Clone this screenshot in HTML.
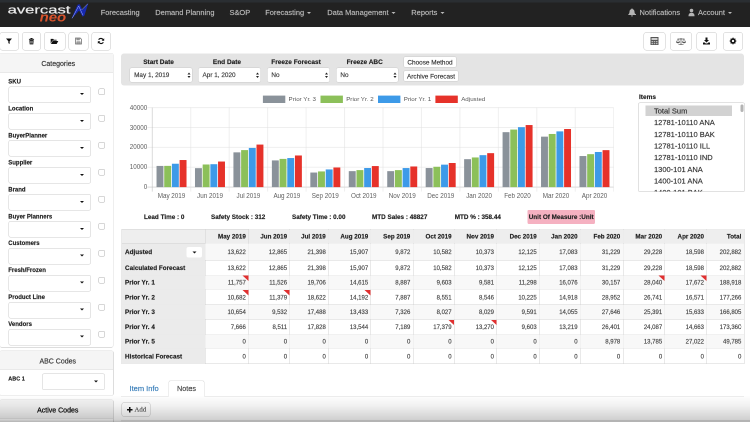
<!DOCTYPE html><html><head><meta charset="utf-8"><title>Avercast Neo</title><style>
*{box-sizing:border-box}
html,body{margin:0;padding:0;background:#fff}
body{width:750px;height:422px;overflow:hidden;position:relative}
#root{position:absolute;left:0;top:0;width:1500px;height:844px;transform:scale(.5);transform-origin:0 0;will-change:transform;font-family:"Liberation Sans",Arial,sans-serif;color:#333;font-size:14px;overflow:hidden;-webkit-text-stroke:.3px}
.abs{position:absolute}
#nav{left:0;top:0;width:1500px;height:53.5px;background:#222}
#nav .strip{left:0;top:0;width:1500px;height:5px;background:#2a2e32}
.nl{position:absolute;top:14px;height:22px;line-height:22px;font-size:14.9px;color:#bababa;white-space:nowrap}
.caret{display:inline-block;width:0;height:0;border-left:4px solid transparent;border-right:4px solid transparent;border-top:4px solid #bababa;vertical-align:middle;margin-left:6px}
.btn{position:absolute;background:#fff;border:1px solid #c6c6c6;border-radius:6px}
.panel{position:absolute;background:#fff;border:1px solid #ddd;border-radius:4px}
.ph{position:absolute;left:0;right:0;top:0;background:#f5f5f5;border-bottom:1px solid #ddd;text-align:center;font-size:14px;color:#333;border-radius:3px 3px 0 0}
.lbl{position:absolute;font-weight:bold;font-size:12px;color:#222;white-space:nowrap;line-height:14px}
.sel{position:absolute;background:#fff;border:1px solid #ccc;border-radius:4px}
.sel i{position:absolute;width:0;height:0;border-left:4px solid transparent;border-right:4px solid transparent;border-top:4px solid #111}
.cb{position:absolute;width:13px;height:13px;border:1px solid #b0b0b0;border-radius:3px;background:#fff}
#fbar{left:242px;top:107px;width:1246px;height:64px;background:#e4e4e4;border-radius:6px}
.fl{position:absolute;top:9px;margin-left:-5px;font-weight:bold;font-size:13px;color:#222;text-align:center;white-space:nowrap;line-height:16px}
.fs{position:absolute;top:28px;height:30px;background:#fff;border:1px solid #ccc;border-radius:4px;font-size:12.8px;color:#383838;line-height:28px;padding-left:8px;white-space:nowrap}
.fs b{position:absolute;right:3px;top:9px;width:6px;height:11px}
.fs b:before,.fs b:after{content:"";position:absolute;left:0;border-left:3px solid transparent;border-right:3px solid transparent}
.fs b:before{top:0;border-bottom:4px solid #222}
.fs b:after{bottom:0;border-top:4px solid #222}
.fb{position:absolute;background:#fff;border:1px solid #ccc;border-radius:3px;font-size:12.8px;color:#333;text-align:center;white-space:nowrap}
.st{position:absolute;top:426px;font-weight:bold;font-size:12.7px;color:#222;white-space:nowrap;line-height:16px}
#tbl{position:absolute;left:243px;top:458.4px;border-collapse:collapse;table-layout:fixed;font-size:12px;color:#444}
#tbl td,#tbl th{border:1px solid #d2d2d2;padding:0 5px 0 0;text-align:right;overflow:hidden;white-space:nowrap;position:relative}
#tbl th{background:#eee;font-weight:bold;font-size:12.5px;color:#222;height:28px}
#tbl td.h{background:#ebebeb;font-weight:bold;font-size:12.7px;color:#222;text-align:left;padding-left:6px}
#tbl tr.o td{background:#f8f8f8}
#tbl tr.o td.h{background:#ebebeb}
#tbl td.m:after{content:"";position:absolute;right:0;top:0;border-left:12px solid transparent;border-top:11px solid #e03030}
</style></head><body><div id="root"><div id="nav" class="abs"><div class="strip abs"></div><svg class="abs" style="left:0;top:0" width="200" height="53" viewBox="0 0 100 26.5"><text x="7.6" y="13.7" stroke="#ededed" stroke-width=".2" font-family="Liberation Sans, Arial, sans-serif" font-size="10.9" fill="#ededed" textLength="62.8" lengthAdjust="spacingAndGlyphs">avercast</text><text x="39.6" y="21.6" font-family="Liberation Sans, Arial, sans-serif" font-size="13.2" font-style="italic" font-weight="bold" fill="#d9532c" textLength="26.6" lengthAdjust="spacingAndGlyphs">neo</text><path d="M71.2 19.3 L77.6 4.8 L79.7 4.2 L82.5 10 L88.3 3.1 L84.5 15.4 L82.7 16.8 L79.1 10.6 Z" fill="#1729b0"/><path d="M72.2 18.2 L78.7 6 L82.9 15.2 M81.6 10 L87.8 3.8" fill="none" stroke="#aab8ff" stroke-width=".5" stroke-linejoin="round"/></svg><div class="nl" style="left:201.4px">Forecasting</div><div class="nl" style="left:310.6px">Demand Planning</div><div class="nl" style="left:459px">S&amp;OP</div><div class="nl" style="left:530.4px">Forecasting<span class=caret></span></div><div class="nl" style="left:654.6px">Data Management<span class=caret></span></div><div class="nl" style="left:822.6px">Reports<span class=caret></span></div><svg class="abs" style="left:1256px;top:16px" width="16" height="18" viewBox="0 0 16 18"><path d="M8 1c-.8 0-1.3.5-1.3 1.2C4.3 2.900 3 4.900 3 7.5c0 3-1.2 4.4-2.5 5.5v1h15v-1C14.2 11.900 13 10.5 13 7.5c0-2.6-1.3-4.6-3.700-5.3C9.3 1.5 8.8 1 8 1zM6 15c0 1.100.9 2 2 2s2-.9 2-2z" fill="#b4b4b4"/></svg><div class="nl" style="left:1279px">Notifications</div><svg class="abs" style="left:1377px;top:17px" width="12" height="16" viewBox="0 0 12 16"><circle cx="6" cy="4" r="3.6" fill="#b4b4b4"/><path d="M0 15.5c0-5 2-7 6-7s6 2 6 7z" fill="#b4b4b4"/></svg><div class="nl" style="left:1396px">Account<span class="caret"></span></div></div><div class="btn" style="left:-1px;top:64px;width:38.6px;height:36.5px"><svg style="position:absolute;left:50%;top:50%;margin-left:-8.0px;margin-top:-8px" width="16" height="16" viewBox="0 0 16 16"><g transform="translate(8.0 8) scale(.85) translate(-8.0 -8)"><path d="M1 2h14l-5.5 6.5v6.5l-3-2v-4.5z" fill="#111"/></g></svg></div><div class="btn" style="left:44.4px;top:64px;width:38px;height:36.5px"><svg style="position:absolute;left:50%;top:50%;margin-left:-8.0px;margin-top:-8px" width="16" height="16" viewBox="0 0 16 16"><g transform="translate(8.0 8) scale(.85) translate(-8.0 -8)"><path d="M5.5 1h5v2h3.5v2h-12v-2h3.5zM3 6h10l-.8 10h-8.4z" fill="#111"/><path d="M6 8v6M8 8v6M10 8v6" stroke="#fff" stroke-width="1"/></g></svg></div><div class="btn" style="left:88.4px;top:64px;width:42.2px;height:36.5px"><svg style="position:absolute;left:50%;top:50%;margin-left:-9.0px;margin-top:-8px" width="18" height="16" viewBox="0 0 18 16"><g transform="translate(9.0 8) scale(.85) translate(-9.0 -8)"><path d="M0 3h6l1.5 2h6.5v2h-10l-4 7zM4.6 8h13.4l-4 7h-13.4z" fill="#111"/></g></svg></div><div class="btn" style="left:136.6px;top:64px;width:40px;height:36.5px"><svg style="position:absolute;left:50%;top:50%;margin-left:-8.0px;margin-top:-8px" width="16" height="16" viewBox="0 0 16 16"><g transform="translate(8.0 8) scale(.85) translate(-8.0 -8)"><path d="M1 1h11l3 3v11h-14z" fill="none" stroke="#707070" stroke-width="1.8"/><path d="M4 1.5h6v4h-6zM4 10h8v5h-8z" fill="#aaa" stroke="#707070" stroke-width="1.4"/></g></svg></div><div class="btn" style="left:182.6px;top:64px;width:39px;height:36.5px"><svg style="position:absolute;left:50%;top:50%;margin-left:-8.0px;margin-top:-8px" width="16" height="16" viewBox="0 0 16 16"><g transform="translate(8.0 8) scale(.85) translate(-8.0 -8)"><path d="M13.5 6.5a6 6 0 0 0-11-1.5" fill="none" stroke="#111" stroke-width="2.6"/><path d="M15.5 1.5v6h-6z" fill="#111"/><path d="M2.5 9.5a6 6 0 0 0 11 1.5" fill="none" stroke="#111" stroke-width="2.6"/><path d="M.5 14.5v-6h6z" fill="#111"/></g></svg></div><div class="btn" style="left:1287.2px;top:64px;width:44px;height:36.5px"><svg style="position:absolute;left:50%;top:50%;margin-left:-8.0px;margin-top:-8px" width="16" height="16" viewBox="0 0 16 16"><rect x="-.5" y="-.5" width="17" height="17" rx="1.5" fill="#555"/><rect x="2" y="2" width="12" height="4" fill="#ccc"/><path d="M2 8h3v2.5h-3zM6.5 8h3v2.5h-3zM11 8h3v2.5h-3zM2 12h3v2.5h-3zM6.5 12h3v2.5h-3zM11 12h3v2.5h-3z" fill="#bbb"/></svg></div><div class="btn" style="left:1340px;top:64px;width:44px;height:36.5px"><svg style="position:absolute;left:50%;top:50%;margin-left:-10.0px;margin-top:-8px" width="20" height="16" viewBox="0 0 20 16"><path d="M10 2v13M5 15.5h10M3 4h14" stroke="#555" stroke-width="1.4" fill="none"/><path d="M4 4l-3.5 6h7zM16 4l-3.5 6h7z" fill="none" stroke="#555" stroke-width="1"/><path d="M.5 10a3.5 2.5 0 0 0 7 0zM12.5 10a3.5 2.5 0 0 0 7 0z" fill="#555"/></svg></div><div class="btn" style="left:1392.8px;top:64px;width:41.2px;height:36.5px"><svg style="position:absolute;left:50%;top:50%;margin-left:-8.0px;margin-top:-8px" width="16" height="16" viewBox="0 0 16 16"><path d="M6 1h4v5h3l-5 5-5-5h3zM1 11h3.5l2 2h3l2-2h3.5v4h-14z" fill="#111"/></svg></div><div class="btn" style="left:1446px;top:64px;width:40px;height:36.5px"><svg style="position:absolute;left:50%;top:50%;margin-left:-8.0px;margin-top:-8px" width="16" height="16" viewBox="0 0 16 16"><path d="M8 0l1.3.2.5 2 1.5.7 1.8-1 1.6 1.700-1 1.8.6 1.5 2 .5v2.4l-2 .5-.6 1.5 1 1.8-1.700 1.700-1.8-1-1.5.6-.5 2h-2.4l-.5-2-1.5-.6-1.8 1-1.700-1.700 1-1.8-.6-1.5-2-.5v-2.4l2-.5.6-1.5-1-1.8 1.700-1.700 1.8 1 1.5-.6.5-2z" fill="#111" transform="translate(1.6 1.2) scale(.8)"/><circle cx="8" cy="8" r="2.3" fill="#fff"/></svg></div><div class="panel" style="left:-1px;top:106px;width:228px;height:589px"><div class="ph" style="height:39px;line-height:40px;padding-left:7px">Categories</div></div><div class="lbl" style="left:16.5px;top:156px">SKU</div><div class="sel" style="left:16.5px;top:172.6px;width:165px;height:33px"><i style="left:142px;top:12.5px"></i></div><div class="cb" style="left:197px;top:176.6px"></div><div class="lbl" style="left:16.5px;top:209.9px">Location</div><div class="sel" style="left:16.5px;top:226.48px;width:165px;height:33px"><i style="left:142px;top:12.5px"></i></div><div class="cb" style="left:197px;top:230.48px"></div><div class="lbl" style="left:16.5px;top:263.8px">BuyerPlanner</div><div class="sel" style="left:16.5px;top:280.36px;width:165px;height:33px"><i style="left:142px;top:12.5px"></i></div><div class="cb" style="left:197px;top:284.36px"></div><div class="lbl" style="left:16.5px;top:317.7px">Supplier</div><div class="sel" style="left:16.5px;top:334.24px;width:165px;height:33px"><i style="left:142px;top:12.5px"></i></div><div class="cb" style="left:197px;top:338.24px"></div><div class="lbl" style="left:16.5px;top:371.6px">Brand</div><div class="sel" style="left:16.5px;top:388.12px;width:165px;height:33px"><i style="left:142px;top:12.5px"></i></div><div class="cb" style="left:197px;top:392.12px"></div><div class="lbl" style="left:16.5px;top:425.5px">Buyer Planners</div><div class="sel" style="left:16.5px;top:442px;width:165px;height:33px"><i style="left:142px;top:12.5px"></i></div><div class="cb" style="left:197px;top:446px"></div><div class="lbl" style="left:16.5px;top:479.4px">Customers</div><div class="sel" style="left:16.5px;top:495.88px;width:165px;height:33px"><i style="left:142px;top:12.5px"></i></div><div class="cb" style="left:197px;top:499.88px"></div><div class="lbl" style="left:16.5px;top:533.3px">Fresh/Frozen</div><div class="sel" style="left:16.5px;top:549.76px;width:165px;height:33px"><i style="left:142px;top:12.5px"></i></div><div class="cb" style="left:197px;top:553.76px"></div><div class="lbl" style="left:16.5px;top:587.2px">Product Line</div><div class="sel" style="left:16.5px;top:603.64px;width:165px;height:33px"><i style="left:142px;top:12.5px"></i></div><div class="cb" style="left:197px;top:607.64px"></div><div class="lbl" style="left:16.5px;top:641.1px">Vendors</div><div class="sel" style="left:16.5px;top:657.52px;width:165px;height:33px"><i style="left:142px;top:12.5px"></i></div><div class="cb" style="left:197px;top:661.52px"></div><div class="panel" style="left:-1px;top:701px;width:228px;height:91px"><div class="ph" style="height:38px;line-height:40px;padding-left:5px">ABC Codes</div></div><div class="lbl" style="left:16.5px;top:750px;font-size:11px">ABC 1</div><div class="sel" style="left:84px;top:747px;width:126px;height:33px"><i style="left:103px;top:13px"></i></div><div class="panel" style="left:-1px;top:799px;width:228px;height:60px"><div class="ph" style="height:38px;line-height:41px;padding-left:5px;color:#111;-webkit-text-stroke:.5px">Active Codes</div></div><div id="fbar" class="abs"><div class="fl" style="left:17.2px;width:125.8px">Start Date</div><div class="fs" style="left:17.2px;width:125.8px">May 1, 2019<b></b></div><div class="fl" style="left:154px;width:125.8px">End Date</div><div class="fs" style="left:154px;width:125.8px">Apr 1, 2020<b></b></div><div class="fl" style="left:291.8px;width:126.6px">Freeze Forecast</div><div class="fs" style="left:291.8px;width:126.6px">No<b></b></div><div class="fl" style="left:429.8px;width:125.2px">Freeze ABC</div><div class="fs" style="left:429.8px;width:125.2px">No<b></b></div><div class="fb" style="left:565px;top:6px;width:106px;height:22px;line-height:21px">Choose Method</div><div class="fb" style="left:565px;top:34px;width:110px;height:22px;line-height:21px">Archive Forecast</div></div><svg class="abs" style="left:0;top:0" width="1500" height="844" viewBox="0 0 750 422" font-family="Liberation Sans, Arial, sans-serif"><line x1="147.3" y1="187.1" x2="613.7" y2="187.1" stroke="#b4b4b4" stroke-width=".5"/><text x="147.2" y="189.2" font-size="6.3" fill="#606060" text-anchor="end">0</text><line x1="147.3" y1="167.23" x2="613.7" y2="167.23" stroke="#dedede" stroke-width=".5"/><text x="147.2" y="169.33" font-size="6.3" fill="#606060" text-anchor="end">10000</text><line x1="147.3" y1="147.36" x2="613.7" y2="147.36" stroke="#dedede" stroke-width=".5"/><text x="147.2" y="149.46" font-size="6.3" fill="#606060" text-anchor="end">20000</text><line x1="147.3" y1="127.49" x2="613.7" y2="127.49" stroke="#dedede" stroke-width=".5"/><text x="147.2" y="129.59" font-size="6.3" fill="#606060" text-anchor="end">30000</text><line x1="147.3" y1="107.62" x2="613.7" y2="107.62" stroke="#dedede" stroke-width=".5"/><text x="147.2" y="109.72" font-size="6.3" fill="#606060" text-anchor="end">40000</text><line x1="152.3" y1="107.62" x2="152.3" y2="191.6" stroke="#b4b4b4" stroke-width=".5"/><line x1="190.75" y1="107.62" x2="190.75" y2="191.6" stroke="#dedede" stroke-width=".5"/><line x1="229.2" y1="107.62" x2="229.2" y2="191.6" stroke="#dedede" stroke-width=".5"/><line x1="267.65" y1="107.62" x2="267.65" y2="191.6" stroke="#dedede" stroke-width=".5"/><line x1="306.1" y1="107.62" x2="306.1" y2="191.6" stroke="#dedede" stroke-width=".5"/><line x1="344.55" y1="107.62" x2="344.55" y2="191.6" stroke="#dedede" stroke-width=".5"/><line x1="383" y1="107.62" x2="383" y2="191.6" stroke="#dedede" stroke-width=".5"/><line x1="421.45" y1="107.62" x2="421.45" y2="191.6" stroke="#dedede" stroke-width=".5"/><line x1="459.9" y1="107.62" x2="459.9" y2="191.6" stroke="#dedede" stroke-width=".5"/><line x1="498.35" y1="107.62" x2="498.35" y2="191.6" stroke="#dedede" stroke-width=".5"/><line x1="536.8" y1="107.62" x2="536.8" y2="191.6" stroke="#dedede" stroke-width=".5"/><line x1="575.25" y1="107.62" x2="575.25" y2="191.6" stroke="#dedede" stroke-width=".5"/><line x1="613.7" y1="107.62" x2="613.7" y2="191.6" stroke="#dedede" stroke-width=".5"/><text x="171.53" y="197.5" font-size="6.3" fill="#606060" text-anchor="middle">May 2019</text><rect x="156.53" y="165.93" width="6.92" height="21.17" fill="#8a929a"/><rect x="164.22" y="165.87" width="6.92" height="21.23" fill="#8cc05a"/><rect x="171.91" y="163.74" width="6.92" height="23.36" fill="#3d9ae8"/><rect x="179.6" y="160.03" width="6.92" height="27.07" fill="#e6322a"/><text x="209.98" y="197.5" font-size="6.3" fill="#606060" text-anchor="middle">Jun 2019</text><rect x="194.98" y="168.16" width="6.92" height="18.94" fill="#8a929a"/><rect x="202.67" y="164.49" width="6.92" height="22.61" fill="#8cc05a"/><rect x="210.36" y="164.2" width="6.92" height="22.9" fill="#3d9ae8"/><rect x="218.05" y="161.54" width="6.92" height="25.56" fill="#e6322a"/><text x="248.43" y="197.5" font-size="6.3" fill="#606060" text-anchor="middle">Jul 2019</text><rect x="233.43" y="152.35" width="6.92" height="34.75" fill="#8a929a"/><rect x="241.12" y="150.1" width="6.92" height="37" fill="#8cc05a"/><rect x="248.81" y="147.94" width="6.92" height="39.16" fill="#3d9ae8"/><rect x="256.5" y="144.58" width="6.92" height="42.52" fill="#e6322a"/><text x="286.88" y="197.5" font-size="6.3" fill="#606060" text-anchor="middle">Aug 2019</text><rect x="271.88" y="160.41" width="6.92" height="26.69" fill="#8a929a"/><rect x="279.57" y="158.9" width="6.92" height="28.2" fill="#8cc05a"/><rect x="287.26" y="158.06" width="6.92" height="29.04" fill="#3d9ae8"/><rect x="294.95" y="155.49" width="6.92" height="31.61" fill="#e6322a"/><text x="325.33" y="197.5" font-size="6.3" fill="#606060" text-anchor="middle">Sep 2019</text><rect x="310.33" y="172.54" width="6.92" height="14.56" fill="#8a929a"/><rect x="318.02" y="171.43" width="6.92" height="15.67" fill="#8cc05a"/><rect x="325.71" y="169.44" width="6.92" height="17.66" fill="#3d9ae8"/><rect x="333.4" y="167.48" width="6.92" height="19.62" fill="#e6322a"/><text x="363.78" y="197.5" font-size="6.3" fill="#606060" text-anchor="middle">Oct 2019</text><rect x="348.78" y="171.15" width="6.92" height="15.95" fill="#8a929a"/><rect x="356.47" y="170.11" width="6.92" height="16.99" fill="#8cc05a"/><rect x="364.16" y="168.02" width="6.92" height="19.08" fill="#3d9ae8"/><rect x="371.85" y="166.07" width="6.92" height="21.03" fill="#e6322a"/><text x="402.23" y="197.5" font-size="6.3" fill="#606060" text-anchor="middle">Nov 2019</text><rect x="387.23" y="171.15" width="6.92" height="15.95" fill="#8a929a"/><rect x="394.92" y="170.12" width="6.92" height="16.98" fill="#8cc05a"/><rect x="402.61" y="168.06" width="6.92" height="19.04" fill="#3d9ae8"/><rect x="410.3" y="166.49" width="6.92" height="20.61" fill="#e6322a"/><text x="440.68" y="197.5" font-size="6.3" fill="#606060" text-anchor="middle">Dec 2019</text><rect x="425.68" y="168.04" width="6.92" height="19.06" fill="#8a929a"/><rect x="433.37" y="166.78" width="6.92" height="20.32" fill="#8cc05a"/><rect x="441.06" y="164.65" width="6.92" height="22.45" fill="#3d9ae8"/><rect x="448.75" y="163.01" width="6.92" height="24.09" fill="#e6322a"/><text x="479.13" y="197.5" font-size="6.3" fill="#606060" text-anchor="middle">Jan 2020</text><rect x="464.13" y="159.17" width="6.92" height="27.93" fill="#8a929a"/><rect x="471.82" y="157.46" width="6.92" height="29.64" fill="#8cc05a"/><rect x="479.51" y="155.16" width="6.92" height="31.94" fill="#3d9ae8"/><rect x="487.2" y="153.16" width="6.92" height="33.94" fill="#e6322a"/><text x="517.58" y="197.5" font-size="6.3" fill="#606060" text-anchor="middle">Feb 2020</text><rect x="502.58" y="132.17" width="6.92" height="54.93" fill="#8a929a"/><rect x="510.27" y="129.57" width="6.92" height="57.53" fill="#8cc05a"/><rect x="517.96" y="127.18" width="6.92" height="59.92" fill="#3d9ae8"/><rect x="525.65" y="125.05" width="6.92" height="62.05" fill="#e6322a"/><text x="556.03" y="197.5" font-size="6.3" fill="#606060" text-anchor="middle">Mar 2020</text><rect x="541.03" y="136.65" width="6.92" height="50.45" fill="#8a929a"/><rect x="548.72" y="133.97" width="6.92" height="53.13" fill="#8cc05a"/><rect x="556.41" y="131.38" width="6.92" height="55.72" fill="#3d9ae8"/><rect x="564.1" y="129.02" width="6.92" height="58.08" fill="#e6322a"/><text x="594.48" y="197.5" font-size="6.3" fill="#606060" text-anchor="middle">Apr 2020</text><rect x="579.48" y="156.04" width="6.92" height="31.06" fill="#8a929a"/><rect x="587.17" y="154.17" width="6.92" height="32.93" fill="#8cc05a"/><rect x="594.86" y="151.99" width="6.92" height="35.11" fill="#3d9ae8"/><rect x="602.55" y="150.15" width="6.92" height="36.95" fill="#e6322a"/><rect x="262.9" y="95.6" width="22.4" height="7.4" fill="#8a929a"/><text x="288.6" y="101.3" font-size="6.2" fill="#5a5a5a">Prior Yr. 3</text><rect x="320.5" y="95.6" width="22.4" height="7.4" fill="#8cc05a"/><text x="346.2" y="101.3" font-size="6.2" fill="#5a5a5a">Prior Yr. 2</text><rect x="378" y="95.6" width="22.4" height="7.4" fill="#3d9ae8"/><text x="403.8" y="101.3" font-size="6.2" fill="#5a5a5a">Prior Yr. 1</text><rect x="435.4" y="95.6" width="22.4" height="7.4" fill="#e6322a"/><text x="461.2" y="101.3" font-size="6.2" fill="#5a5a5a">Adjusted</text></svg><div class="lbl" style="left:1278px;top:187px;font-size:13px">Items</div><div class="abs" style="left:1276px;top:205px;width:214px;height:179px;border:1px solid #c4c4c4;border-radius:4px;background:#fff;overflow:hidden"><div class="abs" style="left:14px;top:5px;width:173px;height:21px;background:#d2d2d2"></div><div class="abs" style="left:31px;top:5px;height:22px;line-height:22px;font-size:15px;color:#333;white-space:nowrap">Total Sum</div><div class="abs" style="left:31px;top:28.35px;height:22px;line-height:22px;font-size:15px;color:#333;white-space:nowrap">12781-10110 ANA</div><div class="abs" style="left:31px;top:51.7px;height:22px;line-height:22px;font-size:15px;color:#333;white-space:nowrap">12781-10110 BAK</div><div class="abs" style="left:31px;top:75.05px;height:22px;line-height:22px;font-size:15px;color:#333;white-space:nowrap">12781-10110 ILL</div><div class="abs" style="left:31px;top:98.4px;height:22px;line-height:22px;font-size:15px;color:#333;white-space:nowrap">12781-10110 IND</div><div class="abs" style="left:31px;top:121.75px;height:22px;line-height:22px;font-size:15px;color:#333;white-space:nowrap">1300-101 ANA</div><div class="abs" style="left:31px;top:145.1px;height:22px;line-height:22px;font-size:15px;color:#333;white-space:nowrap">1400-101 ANA</div><div class="abs" style="left:31px;top:168.45px;height:22px;line-height:22px;font-size:15px;color:#333;white-space:nowrap">1400-101 BAK</div><div class="abs" style="left:203.5px;top:2.5px;width:6px;height:15px;background:#b4b4b4;border-radius:3px"></div></div><div class="st" style="left:288px">Lead Time : 0</div><div class="st" style="left:422px">Safety Stock : 312</div><div class="st" style="left:584px">Safety Time : 0.00</div><div class="st" style="left:744px">MTD Sales : 48827</div><div class="st" style="left:909.4px">MTD % : 358.44</div><div class="st" style="left:1054.6px;top:420px;width:135.4px;height:27px;line-height:28px;background:#f5b1c1;text-align:center;border-radius:2px">Unit Of Measure :Unit</div><table id="tbl" style="width:1244.8px"><colgroup><col style="width:166.6px"><col style="width:87px"><col style="width:82.6px"><col style="width:77.4px"><col style="width:84.8px"><col style="width:84.2px"><col style="width:82.6px"><col style="width:84.8px"><col style="width:85.4px"><col style="width:81.8px"><col style="width:85.4px"><col style="width:83.8px"><col style="width:83.6px"><col style="width:74.8px"></colgroup><tr><th></th><th>May 2019</th><th>Jun 2019</th><th>Jul 2019</th><th>Aug 2019</th><th>Sep 2019</th><th>Oct 2019</th><th>Nov 2019</th><th>Dec 2019</th><th>Jan 2020</th><th>Feb 2020</th><th>Mar 2020</th><th>Apr 2020</th><th>Total</th></tr><tr class="o" style="height:34px"><td class="h">Adjusted<span style="position:absolute;left:129px;top:7px;width:31px;height:21px;background:#fff;border-radius:4px"></span><span style="position:absolute;left:141px;top:16px;border-left:4px solid transparent;border-right:4px solid transparent;border-top:4px solid #111"></span></td><td>13,622</td><td>12,865</td><td>21,398</td><td>15,907</td><td>9,872</td><td>10,582</td><td>10,373</td><td>12,125</td><td>17,083</td><td>31,229</td><td>29,228</td><td>18,598</td><td>202,882</td></tr><tr class="e" style="height:29.5px"><td class="h">Calculated Forecast</td><td>13,622</td><td>12,865</td><td>21,398</td><td>15,907</td><td>9,872</td><td>10,582</td><td>10,373</td><td>12,125</td><td>17,083</td><td>31,229</td><td>29,228</td><td>18,598</td><td>202,882</td></tr><tr class="o" style="height:29.5px"><td class="h">Prior Yr. 1</td><td class=m>11,757</td><td>11,526</td><td>19,706</td><td>14,615</td><td>8,887</td><td>9,603</td><td>9,581</td><td>11,298</td><td>16,076</td><td>30,157</td><td class=m>28,040</td><td class=m>17,672</td><td>188,918</td></tr><tr class="e" style="height:29.5px"><td class="h">Prior Yr. 2</td><td class=m>10,682</td><td class=m>11,379</td><td>18,622</td><td class=m>14,192</td><td>7,887</td><td>8,551</td><td>8,546</td><td>10,225</td><td>14,918</td><td>28,952</td><td>26,741</td><td>16,571</td><td>177,266</td></tr><tr class="o" style="height:29.5px"><td class="h">Prior Yr. 3</td><td>10,654</td><td>9,532</td><td>17,488</td><td>13,433</td><td>7,326</td><td>8,027</td><td>8,029</td><td>9,591</td><td>14,055</td><td>27,646</td><td>25,391</td><td>15,633</td><td>166,805</td></tr><tr class="e" style="height:29.5px"><td class="h">Prior Yr. 4</td><td>7,666</td><td>8,511</td><td>17,828</td><td>13,544</td><td>7,189</td><td class=m>17,379</td><td class=m>13,270</td><td>9,603</td><td>13,219</td><td>26,401</td><td>24,087</td><td>14,663</td><td>173,360</td></tr><tr class="o" style="height:29.5px"><td class="h">Prior Yr. 5</td><td>0</td><td>0</td><td>0</td><td>0</td><td>0</td><td>0</td><td>0</td><td>0</td><td>0</td><td>8,978</td><td>13,785</td><td>27,022</td><td>49,785</td></tr><tr class="e" style="height:29.5px"><td class="h">Historical Forecast</td><td>0</td><td>0</td><td>0</td><td>0</td><td>0</td><td>0</td><td>0</td><td>0</td><td>0</td><td>0</td><td>0</td><td>0</td><td>0</td></tr></table><div class="abs" style="left:242px;top:792px;width:1246px;height:1px;background:#ddd"></div><div class="abs" style="left:259px;top:767px;font-size:15px;color:#337ab7;line-height:20px;white-space:nowrap">Item Info</div><div class="abs" style="left:337px;top:761px;width:72px;height:32px;border:1px solid #ddd;border-bottom-color:#fff;border-radius:4px 4px 0 0;background:#fff;text-align:center;font-size:14.5px;color:#444;line-height:31px">Notes</div><div class="btn" style="left:243px;top:804px;width:58px;height:30px"><svg style="position:absolute;left:10px;top:9px" width="11" height="11" viewBox="0 0 11 11"><path d="M4 0h3v4h4v3h-4v4h-3v-4h-4v-3h4z" fill="#111"/></svg><span style="position:absolute;left:25px;top:6px;font-family:'Liberation Serif',serif;font-size:13.5px;color:#555;line-height:16px">Add</span></div><div class="abs" style="left:0;top:790px;width:1500px;height:54px;background:linear-gradient(to bottom,rgba(0,0,0,0) 0%,rgba(0,0,0,.06) 40%,rgba(0,0,0,.19) 92%,rgba(0,0,0,.3) 100%);pointer-events:none"></div><div class="abs" style="left:242px;top:839.5px;width:1258px;height:5px;background:#b4b4b4"></div></div></body></html>
